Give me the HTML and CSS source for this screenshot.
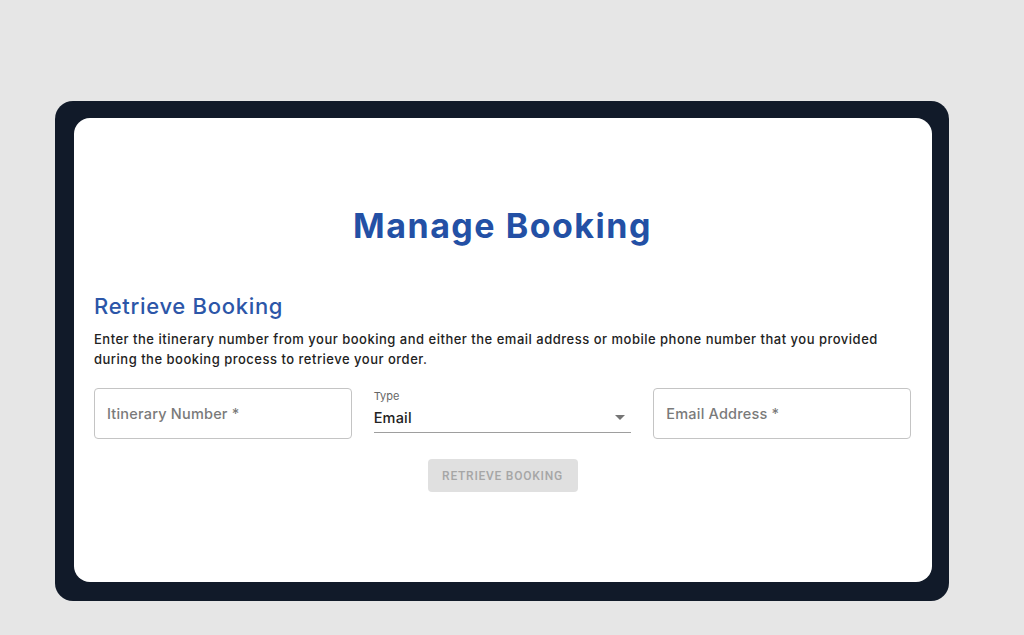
FILE: index.html
```html
<!DOCTYPE html>
<html lang="en">
<head>
  <meta charset="UTF-8" />
  <meta name="viewport" content="width=device-width, initial-scale=1.0" />
  <title>Manage Booking</title>
  <link rel="stylesheet" href="styles.css">
</head>
<body>
  <div class="frame">
    <main class="card">
      <h1 class="page-title">Manage Booking</h1>

      <section class="retrieve">
        <h2>Retrieve Booking</h2>
        <p class="intro">Enter the itinerary number from your booking and either the email address or mobile phone number that you provided during the booking process to retrieve your order.</p>

        <div class="fields">
          <div class="outlined">
            <span class="placeholder">Itinerary Number *</span>
          </div>

          <div class="select">
            <span class="select-label">Type</span>
            <div class="select-value">
              <span>Email</span>
              <svg class="caret" width="10" height="5" viewBox="0 0 10 5"><path d="M0 0h10L5 5z" fill="#757575"/></svg>
            </div>
          </div>

          <div class="outlined">
            <span class="placeholder">Email Address *</span>
          </div>
        </div>

        <div class="actions">
          <button class="btn-retrieve" disabled>Retrieve Booking</button>
        </div>
      </section>
    </main>
  </div>
</body>
</html>
```

FILE: styles.css
```css
* {
  margin: 0;
  padding: 0;
  box-sizing: border-box;
}

body {
  background: #e6e6e6;
  font-family: Inter, "Noto Sans", sans-serif;
  padding: 101px 0 0 55px;
}

.frame {
  width: 894px;
  height: 500px;
  background: #111a29;
  border-radius: 18px;
  padding: 17px 17px 19px 19px;
}

.card {
  background: #ffffff;
  border-radius: 16px;
  height: 100%;
  padding: 88px 21px 0 20px;
}

.page-title {
  text-align: center;
  color: #2350a5;
  font-size: 34px;
  font-weight: 700;
  line-height: 40px;
  letter-spacing: 1.5px;
}

.retrieve {
  margin-top: 46px;
}

.retrieve h2 {
  color: #2c56a8;
  font-size: 22px;
  font-weight: 500;
  line-height: 28px;
  letter-spacing: 0.7px;
}

.intro {
  margin-top: 9px;
  color: #222222;
  font-size: 13px;
  line-height: 20px;
  font-weight: 500;
  letter-spacing: 0.5px;
}

.fields {
  display: grid;
  grid-template-columns: repeat(3, 1fr);
  gap: 22px;
  margin-top: 19px;
}

.outlined {
  height: 51px;
  border: 1px solid #c4c4c4;
  border-radius: 4px;
  display: flex;
  align-items: center;
  padding-left: 12px;
}

.placeholder {
  color: #7a7a7a;
  font-size: 14.5px;
  font-weight: 500;
  letter-spacing: 0.2px;
}

.select {
  padding-top: 1px;
}

.select-label {
  display: block;
  color: #666666;
  font-size: 11px;
  line-height: 14px;
}

.select-value {
  display: flex;
  align-items: center;
  justify-content: space-between;
  height: 30px;
  border-bottom: 1px solid #9e9e9e;
  color: #222222;
  font-size: 14.5px;
  font-weight: 500;
  letter-spacing: 0.2px;
  padding-right: 6px;
}

.actions {
  display: flex;
  justify-content: center;
  margin-top: 20px;
}

.btn-retrieve {
  width: 150px;
  height: 33px;
  border: none;
  border-radius: 4px;
  background: #e0e0e0;
  color: #a6a6a6;
  font-family: Roboto, sans-serif;
  font-size: 12px;
  font-weight: 500;
  text-transform: uppercase;
  letter-spacing: 0.75px;
}
```
